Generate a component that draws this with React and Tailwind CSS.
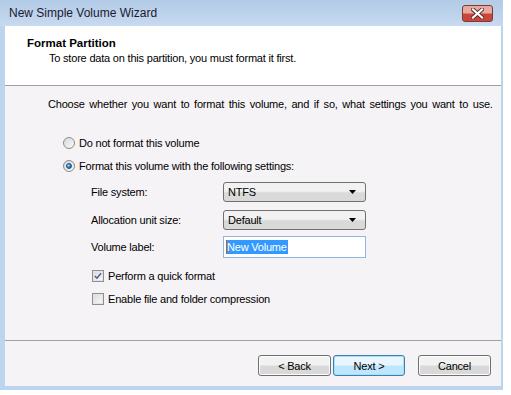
import React from "react";

const font = { fontFamily: '"Liberation Sans", Arial, sans-serif' };

const Radio = ({ checked }) => (
  <span className="flex h-[12px] w-[12px] shrink-0 items-center justify-center rounded-full border border-[#8a8a8a] bg-gradient-to-br from-[#d8d8d8] to-[#fbfbfb]">
    {checked && (
      <span className="h-[6px] w-[6px] rounded-full border border-[#1f4f7a] bg-[radial-gradient(circle_at_35%_35%,#a8e0ff,#1d78c0_60%,#0b3e6e)]" />
    )}
  </span>
);

const Checkbox = ({ checked }) => (
  <span className="flex h-[12px] w-[12px] shrink-0 items-center justify-center border border-[#8e8f8f] bg-white">
    <span className="flex h-[10px] w-[10px] items-center justify-center border border-[#e3e3e3] bg-gradient-to-br from-[#dcdcdc] to-[#f8f8f8]">
      {checked && (
        <svg width="9" height="8" viewBox="0 0 9 8">
          <path d="M1 4 L3.3 6.5 L8 0.8" fill="none" stroke="#4a5f97" strokeWidth="1.7" />
        </svg>
      )}
    </span>
  </span>
);

const Combo = ({ value }) => (
  <div className="flex h-[20px] w-[143px] items-center justify-between rounded-[3px] border border-[#707070] bg-gradient-to-b from-[#f2f2f2] from-45% to-[#d9d9d9] to-55% pl-[4px] pr-[8px]">
    <span>{value}</span>
    <svg width="8" height="4" viewBox="0 0 8 4">
      <path d="M0 0 H7 L3.5 4 Z" fill="#000" />
    </svg>
  </div>
);

const Button = ({ children, primary, className = "" }) => (
  <button
    className={`flex h-[21px] items-center justify-center rounded-[3px] border ${
      primary
        ? "border-[#3c7fb1] bg-gradient-to-b from-[#eaf6fd] from-45% to-[#bee6fd] to-55% shadow-[inset_0_0_0_1px_#a6dff6]"
        : "border-[#707070] bg-gradient-to-b from-[#f2f2f2] from-45% to-[#d9d9d9] to-55% shadow-[inset_0_0_0_1px_#fcfcfc]"
    } ${className}`}
  >
    {children}
  </button>
);

export default function App() {
  return (
    <div className="h-[395px] w-[511px] bg-white text-[11px] leading-[14px] tracking-[-0.2px] text-black" style={font}>
      <div className="flex h-[390px] w-[503px] flex-col bg-[#bcd4ee]">
        {/* title bar */}
        <div className="flex h-[26px] shrink-0 items-center justify-between bg-gradient-to-b from-[#b3cbe7] to-[#c6daf0] pl-[9px] pr-[10px]">
          <span className="text-[12px] tracking-normal text-[#1a1a2e]">New Simple Volume Wizard</span>
          <span className="flex h-[17px] w-[31px] items-center justify-center rounded-[3px] border border-[#7d3a33] bg-gradient-to-b from-[#e8a99f] from-45% to-[#c9463b] to-55%">
            <svg width="13" height="11" viewBox="0 0 13 11">
              <path d="M2 1.5 L11 9.5 M11 1.5 L2 9.5" stroke="#5a2a26" strokeWidth="4" strokeLinecap="square" />
              <path d="M2 1.5 L11 9.5 M11 1.5 L2 9.5" stroke="#fff" strokeWidth="2.2" strokeLinecap="square" />
            </svg>
          </span>
        </div>

        {/* client area */}
        <div className="mb-[4px] ml-[5px] mr-[2px] flex flex-1 flex-col bg-[#f6f3f6]">
          <div className="flex h-[60px] shrink-0 flex-col border-b border-[#a0a0a0] bg-white">
            <div className="mt-[10px] pl-[22px] text-[11.5px] font-bold tracking-normal">Format Partition</div>
            <div className="mt-[1px] pl-[44px]">To store data on this partition, you must format it first.</div>
          </div>

          <div className="flex flex-1 flex-col border-b border-[#a0a0a0]">
            <div className="mt-[11px] pl-[43px] [word-spacing:1.8px]">
              Choose whether you want to format this volume, and if so, what settings you want to use.
            </div>

            <div className="mt-[26px] flex h-[12px] items-center gap-[4px] pl-[58px]">
              <Radio />
              <span>Do not format this volume</span>
            </div>
            <div className="mt-[11px] flex h-[12px] items-center gap-[4px] pl-[58px]">
              <Radio checked />
              <span>Format this volume with the following settings:</span>
            </div>

            <div className="mt-[10px] flex h-[20px] items-center pl-[86px]">
              <span className="w-[132px]">File system:</span>
              <Combo value="NTFS" />
            </div>
            <div className="mt-[8px] flex h-[20px] items-center pl-[86px]">
              <span className="w-[132px]">Allocation unit size:</span>
              <Combo value="Default" />
            </div>
            <div className="mt-[6px] flex h-[22px] items-center pl-[86px]">
              <span className="w-[132px]">Volume label:</span>
              <div className="flex h-[22px] w-[143px] items-center border border-[#8fb8de] bg-white pl-[2px]">
                <span className="border-l border-[#c05a20] bg-[#3399ff] pr-[1px] text-white">New Volume</span>
              </div>
            </div>

            <div className="mt-[12px] flex h-[12px] items-center gap-[4px] pl-[87px]">
              <Checkbox checked />
              <span>Perform a quick format</span>
            </div>
            <div className="mt-[11px] flex h-[12px] items-center gap-[4px] pl-[87px]">
              <Checkbox />
              <span>Enable file and folder compression</span>
            </div>
          </div>

          <div className="flex h-[45px] shrink-0 items-start justify-end pr-[10px] pt-[14px]">
            <Button className="w-[73px]">&lt; Back</Button>
            <Button primary className="ml-[2px] w-[72px]">Next &gt;</Button>
            <Button className="ml-[13px] w-[73px]">Cancel</Button>
          </div>
        </div>
      </div>
    </div>
  );
}
